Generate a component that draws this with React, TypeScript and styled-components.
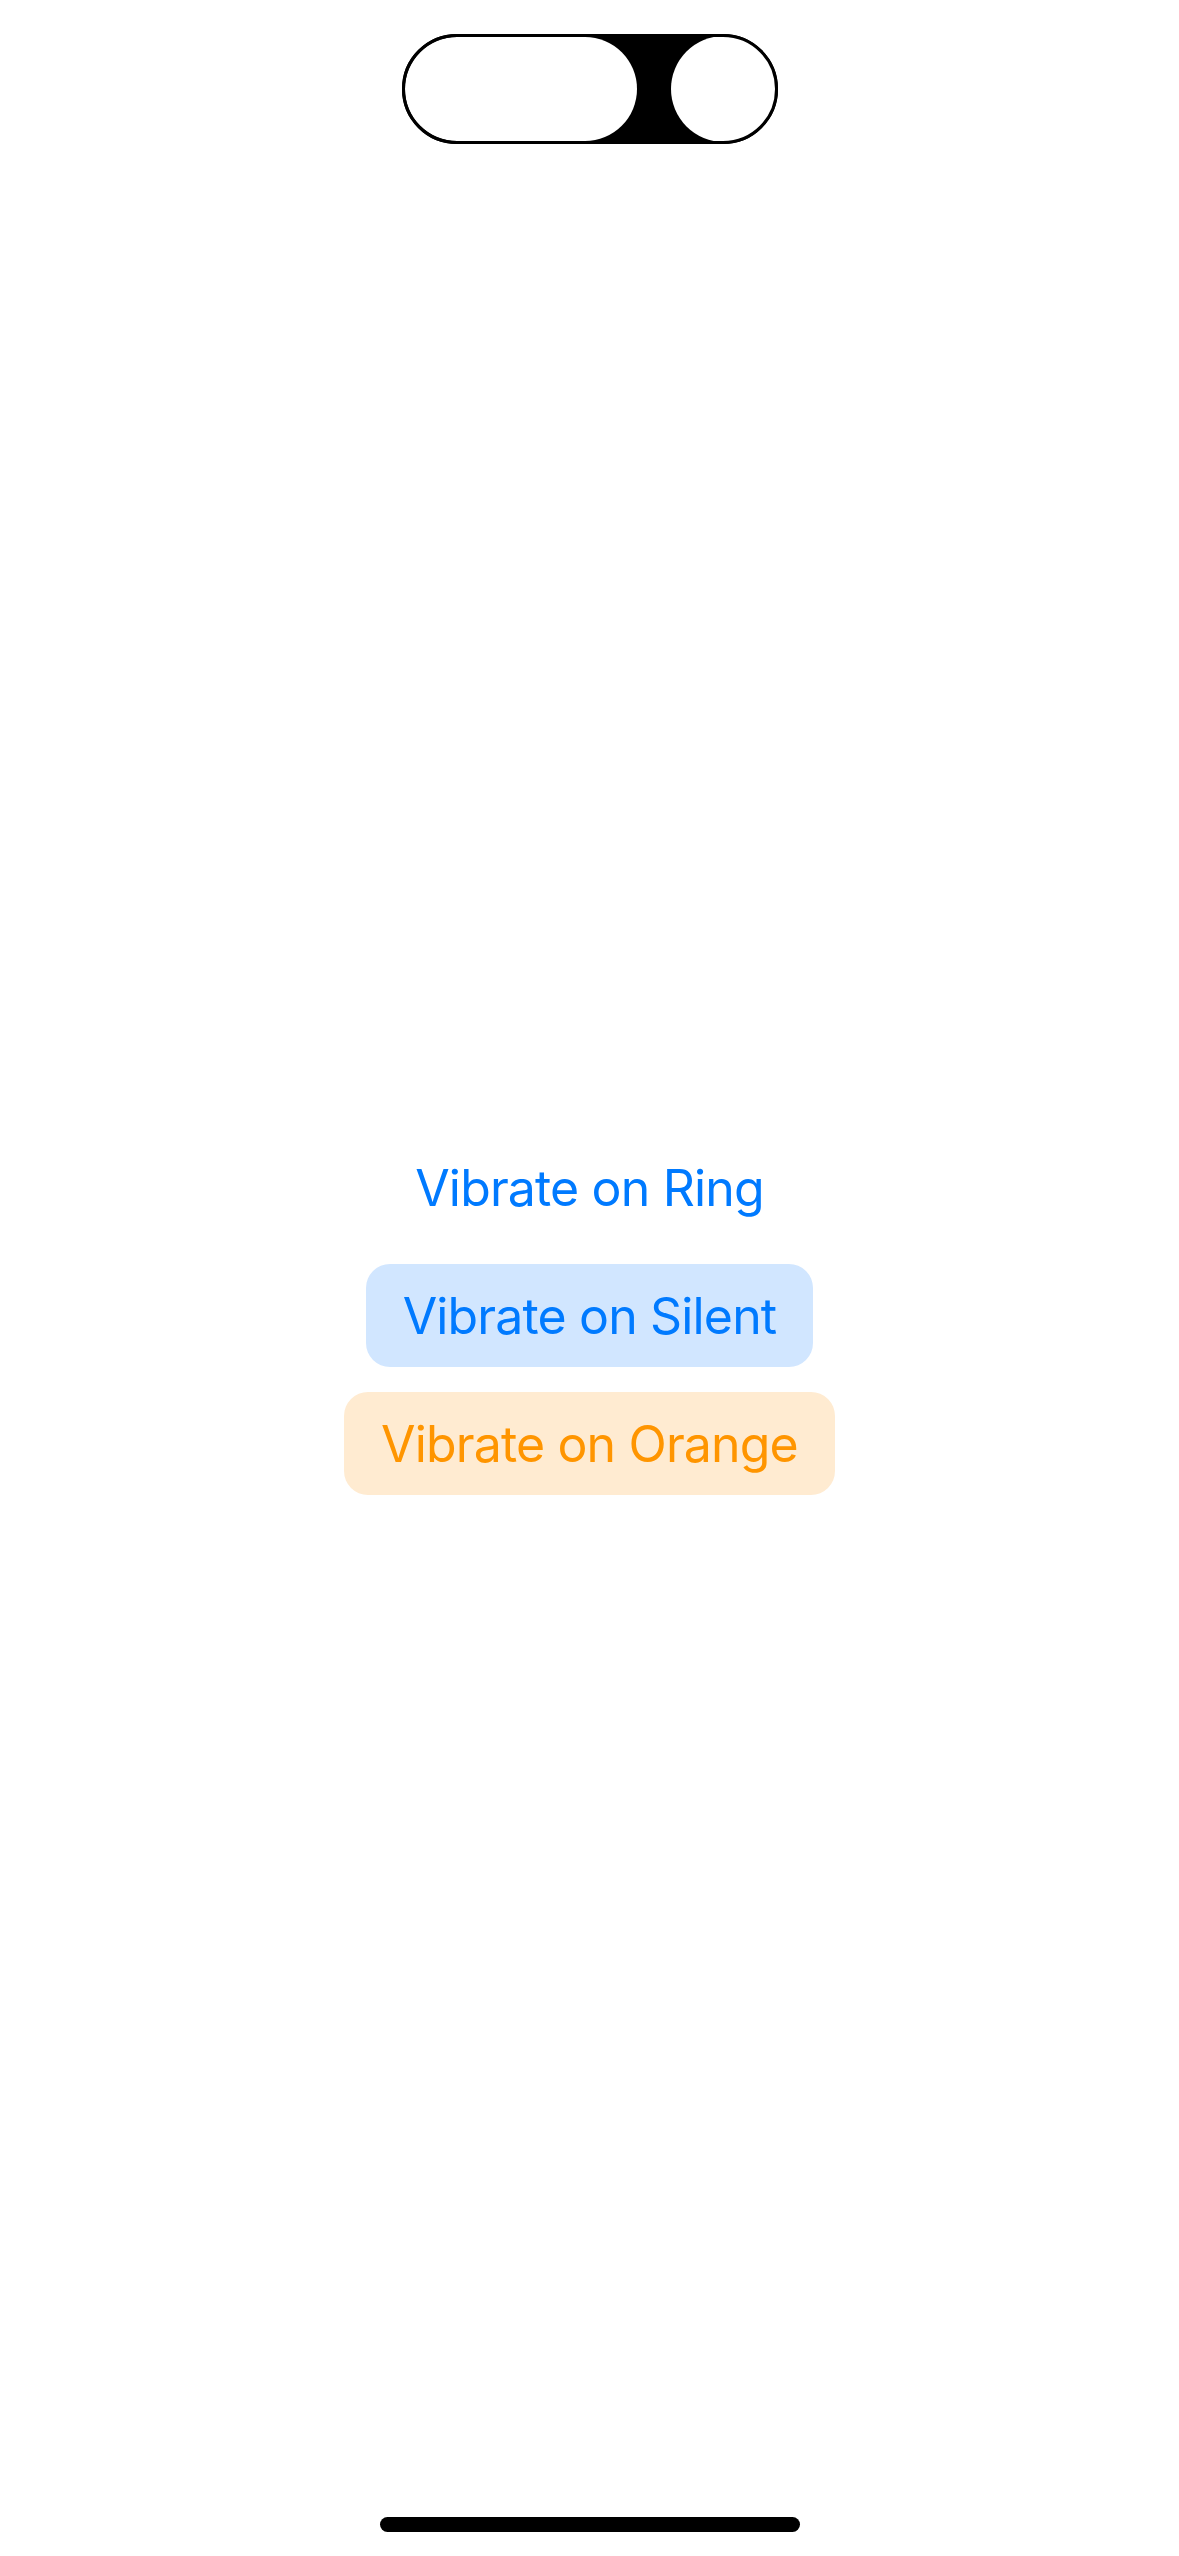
import React from "react";
import styled, { createGlobalStyle } from "styled-components";

const GlobalStyle = createGlobalStyle`
  html, body {
    margin: 0;
    padding: 0;
    background: #ffffff;
  }
  body {
    font-family: Inter, "Noto Sans", "Liberation Sans", sans-serif;
  }
`;

const Screen = styled.div`
  position: relative;
  width: 1179px;
  height: 2556px;
  box-sizing: border-box;
  padding: 177px 0 102px;
  display: flex;
  flex-direction: column;
  align-items: center;
  justify-content: center;
  background: #ffffff;
  overflow: hidden;
`;

const Island = styled.svg`
  position: absolute;
  top: 34px;
  left: 402px;
`;

const ButtonStack = styled.div`
  display: flex;
  flex-direction: column;
  align-items: center;
  gap: 25px;
`;

const VibrateButton = styled.button<{ $tone: "plain" | "blue" | "orange" }>`
  height: 103px;
  padding: 0 37px;
  border: none;
  border-radius: 24px;
  font-family: inherit;
  font-size: 50px;
  font-weight: 400;
  letter-spacing: -0.85px;
  display: flex;
  align-items: center;
  justify-content: center;
  cursor: pointer;
  color: ${(p) => (p.$tone === "orange" ? "#ff9500" : "#007aff")};
  background: ${(p) =>
    p.$tone === "blue" ? "#d1e6ff" : p.$tone === "orange" ? "#ffebd1" : "transparent"};
`;

const HomeIndicator = styled.div`
  position: absolute;
  bottom: 24px;
  left: 380px;
  width: 420px;
  height: 15px;
  border-radius: 8px;
  background: #000000;
`;

const App = () => {
  return (
    <>
      <GlobalStyle />
      <Screen>
        <Island width="376" height="110" viewBox="0 0 376 110">
          <rect x="1.5" y="1.5" width="373" height="107" rx="53.5" fill="#000" stroke="#000" strokeWidth="3" />
          <rect x="3" y="3" width="232" height="104" rx="52" fill="#fff" />
          <circle cx="322" cy="55" r="53" fill="#fff" />
          <rect x="1.5" y="1.5" width="373" height="107" rx="53.5" fill="none" stroke="#000" strokeWidth="3" />
        </Island>
        <ButtonStack>
          <VibrateButton $tone="plain">Vibrate on Ring</VibrateButton>
          <VibrateButton $tone="blue">Vibrate on Silent</VibrateButton>
          <VibrateButton $tone="orange">Vibrate on Orange</VibrateButton>
        </ButtonStack>
        <HomeIndicator />
      </Screen>
    </>
  );
};

export default App;
